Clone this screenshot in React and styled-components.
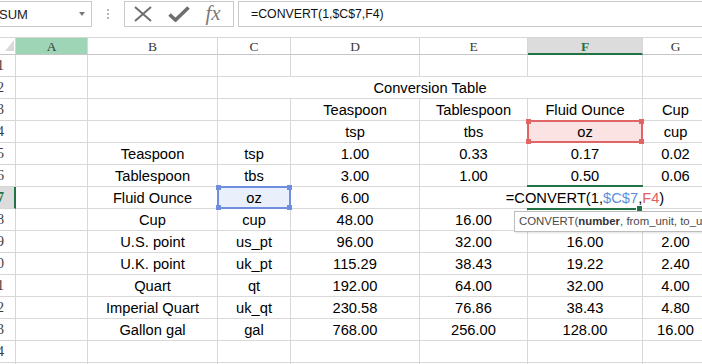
import React from 'react'
import styled, { createGlobalStyle, css } from 'styled-components'

const GlobalStyle = createGlobalStyle`
  html, body {
    margin: 0;
    padding: 0;
    background: #fff;
    overflow: hidden;
  }
  body {
    font-family: "Liberation Sans", Arial, sans-serif;
    color: #000;
  }
`

const COLUMNS = ['A', 'B', 'C', 'D', 'E', 'F', 'G']

// B, C, D, E, F, G
const ROWS = [
  ['', '', '', '', '', ''],
  null,
  ['', '', 'Teaspoon', 'Tablespoon', 'Fluid Ounce', 'Cup'],
  ['', '', 'tsp', 'tbs', 'oz', 'cup'],
  ['Teaspoon', 'tsp', '1.00', '0.33', '0.17', '0.02'],
  ['Tablespoon', 'tbs', '3.00', '1.00', '0.50', '0.06'],
  ['Fluid Ounce', 'oz', '6.00', '', '', ''],
  ['Cup', 'cup', '48.00', '16.00', '', ''],
  ['U.S. point', 'us_pt', '96.00', '32.00', '16.00', '2.00'],
  ['U.K. point', 'uk_pt', '115.29', '38.43', '19.22', '2.40'],
  ['Quart', 'qt', '192.00', '64.00', '32.00', '4.00'],
  ['Imperial Quart', 'uk_qt', '230.58', '76.86', '38.43', '4.80'],
  ['Gallon gal', 'gal', '768.00', '256.00', '128.00', '16.00'],
  ['', '', '', '', '', ''],
  ['', '', '', '', '', ''],
]

const Page = styled.div`
  width: 760px;
`

/* ---------- formula bar ---------- */

const Toolbar = styled.div`
  display: flex;
  height: 26px;
  padding-top: 1px;
  margin-bottom: 10px;
`

const NameBox = styled.div`
  width: 92px;
  display: flex;
  align-items: center;
  justify-content: space-between;
  border: 1px solid #c9c9c9;
  border-left: none;
  padding-right: 6px;
  box-sizing: border-box;
  font-size: 13px;
  color: #222;
  span {
    margin-left: -1px;
  }
`

const Caret = styled.i`
  width: 0;
  height: 0;
  border-left: 3.5px solid transparent;
  border-right: 3.5px solid transparent;
  border-top: 4px solid #7a7a7a;
`

const Grip = styled.div`
  width: 32px;
  display: flex;
  flex-direction: column;
  align-items: center;
  justify-content: center;
  gap: 2px;
  i {
    width: 2px;
    height: 2px;
    background: #b5b5b5;
  }
`

const ButtonGroup = styled.div`
  width: 110px;
  display: flex;
  align-items: center;
  border: 1px solid #c9c9c9;
  box-sizing: border-box;
`

const IconSlot = styled.div`
  width: 36px;
  display: flex;
  justify-content: center;
  align-items: center;
`

const Fx = styled.span`
  font-family: "Liberation Serif", "DejaVu Serif", serif;
  font-style: italic;
  font-size: 21px;
  color: #7b7b7b;
  margin-top: -2px;
  margin-left: -4px;
`

const FormulaInput = styled.div`
  flex: 1;
  margin-left: 4px;
  border: 1px solid #c9c9c9;
  border-right: none;
  padding-left: 12px;
  font-size: 12.3px;
  line-height: 24px;
  color: #111;
  white-space: nowrap;
`

/* ---------- sheet ---------- */

const Sheet = styled.div`
  display: grid;
  grid-template-columns: 16px 72px 130px 73px 129px 108px 115px 66px;
  grid-template-rows: 17px;
  grid-auto-rows: 22px;
  border-top: 1px solid #d6d6d6;
`

const Head = styled.div`
  display: flex;
  align-items: center;
  box-sizing: border-box;
  border-right: 1px solid #d6d6d6;
  border-bottom: 1px solid #c6c6c6;
  font-family: "Liberation Serif", "DejaVu Serif", serif;
  font-size: 13.5px;
  color: #3a3a3a;
  background: #fff;
  white-space: nowrap;
`

const ColHead = styled(Head)`
  justify-content: center;
  padding-top: 1px;
  ${p => p.$state === 'picked' && css`
    background: #9fd5b7;
  `}
  ${p => p.$state === 'active' && css`
    background: #dcdcdc;
    color: #217346;
    font-weight: bold;
    border-bottom: 2px solid #217346;
    padding-top: 2px;
  `}
`

const RowHead = styled(Head)`
  justify-content: flex-end;
  padding-right: 11px;
  border-bottom-color: #d6d6d6;
  font-size: 14px;
  ${p => p.$active && css`
    background: #dcdcdc;
    color: #217346;
    font-weight: bold;
    border-right: 2px solid #217346;
    padding-right: 10px;
  `}
`

const Corner = styled(Head)`
  justify-content: flex-end;
  align-items: flex-end;
  padding: 0 1px 3px 0;
  &::after {
    content: '';
    width: 9px;
    height: 11px;
    background: #dadada;
    clip-path: polygon(100% 0, 100% 100%, 0 100%);
  }
`

const Cell = styled.div`
  position: relative;
  display: flex;
  align-items: center;
  justify-content: center;
  box-sizing: border-box;
  border-right: 1px solid #d9d9d9;
  border-bottom: 1px solid #d9d9d9;
  font-size: 14.7px;
  white-space: nowrap;
  grid-column: span ${p => p.$span || 1};
  background: ${p => p.$fill || '#fff'};
`

const RefBox = styled.span`
  position: absolute;
  inset: -1px;
  border: 2px solid ${p => p.$color};
  z-index: 2;
  pointer-events: none;
`

const Handle = styled.i`
  position: absolute;
  width: 5px;
  height: 5px;
  background: ${p => p.$color};
  ${p => (p.$y === 'top' ? 'top: -3px;' : 'bottom: -3px;')}
  ${p => (p.$x === 'left' ? 'left: -3px;' : 'right: -3px;')}
`

const EditText = styled.span`
  position: absolute;
  top: 0;
  bottom: 0;
  left: 50%;
  transform: translateX(-50%);
  padding: 0 3px;
  display: flex;
  align-items: center;
  background: #fff;
  z-index: 3;
`

const Ref = styled.span`
  color: ${p => p.$color};
`

const EditEdge = styled.span`
  position: absolute;
  height: 2px;
  background: #217346;
  z-index: 3;
  ${p => p.$side === 'top' ? css`
    top: -2px;
    left: -1px;
    right: -1px;
  ` : css`
    top: 100%;
    left: -1px;
    right: 5px;
  `}
`

const FillHandle = styled.i`
  position: absolute;
  right: -1px;
  bottom: -4px;
  width: 5px;
  height: 5px;
  background: #217346;
  border: 1px solid #fff;
  z-index: 3;
`

const Tooltip = styled.div`
  position: absolute;
  left: -14px;
  top: 24px;
  padding: 0 4px;
  height: 19px;
  line-height: 18px;
  border: 1px solid #bdbdbd;
  background: #fff;
  box-shadow: 1px 1px 2px rgba(0, 0, 0, 0.12);
  font-size: 11.4px;
  color: #4a4a4a;
  white-space: nowrap;
  z-index: 4;
  b {
    color: #333;
  }
`

const CloseIcon = () => (
  <svg width="20" height="16" viewBox="0 0 20 16">
    <path d="M2 1 L18 15 M18 1 L2 15" stroke="#6e6e6e" strokeWidth="2" fill="none" />
  </svg>
)

const CheckIcon = () => (
  <svg width="22" height="16" viewBox="0 0 22 16">
    <path d="M1.5 8.5 L7.5 14 L20.5 1.5" stroke="#6e6e6e" strokeWidth="3.6" fill="none" />
  </svg>
)

const Corners = ({ color }) => (
  <>
    <Handle $color={color} $y="top" $x="left" />
    <Handle $color={color} $y="top" $x="right" />
    <Handle $color={color} $y="bottom" $x="left" />
    <Handle $color={color} $y="bottom" $x="right" />
  </>
)

const renderCell = (row, col, value) => {
  const key = `${col}${row}`
  if (key === 'F4') {
    return (
      <Cell key={key} $fill="#fbe3e3">
        {value}
        <RefBox $color="#e06565"><Corners color="#e06565" /></RefBox>
      </Cell>
    )
  }
  if (key === 'C7') {
    return (
      <Cell key={key} $fill="#e9effb">
        {value}
        <RefBox $color="#6f8fdc"><Corners color="#6f8fdc" /></RefBox>
      </Cell>
    )
  }
  if (key === 'F7') {
    return (
      <Cell key={key}>
        <EditEdge $side="top" />
        <EditText>
          =CONVERT(1,<Ref $color="#5b8fdc">$C$7</Ref>,<Ref $color="#e06060">F4</Ref>)
        </EditText>
        <EditEdge $side="bottom" />
        <FillHandle />
        <Tooltip>
          CONVERT(<b>number</b>, from_unit, to_unit)
        </Tooltip>
      </Cell>
    )
  }
  return <Cell key={key}>{value}</Cell>
}

const App = () => {
  return (
    <Page>
      <GlobalStyle />
      <Toolbar>
        <NameBox>
          <span>SUM</span>
          <Caret />
        </NameBox>
        <Grip>
          <i />
          <i />
          <i />
        </Grip>
        <ButtonGroup>
          <IconSlot><CloseIcon /></IconSlot>
          <IconSlot><CheckIcon /></IconSlot>
          <IconSlot><Fx>fx</Fx></IconSlot>
        </ButtonGroup>
        <FormulaInput>=CONVERT(1,$C$7,F4)</FormulaInput>
      </Toolbar>

      <Sheet>
        <Corner />
        {COLUMNS.map(c => (
          <ColHead key={c} $state={c === 'A' ? 'picked' : c === 'F' ? 'active' : ''}>
            {c}
          </ColHead>
        ))}

        {ROWS.map((cells, i) => {
          const row = i + 1
          return (
            <React.Fragment key={row}>
              <RowHead $active={row === 7}>{row}</RowHead>
              <Cell />
              {cells === null ? (
                <>
                  <Cell />
                  <Cell $span={4}>Conversion Table</Cell>
                  <Cell />
                </>
              ) : (
                cells.map((v, j) => renderCell(row, COLUMNS[j + 1], v))
              )}
            </React.Fragment>
          )
        })}
      </Sheet>
    </Page>
  )
}

export default App
